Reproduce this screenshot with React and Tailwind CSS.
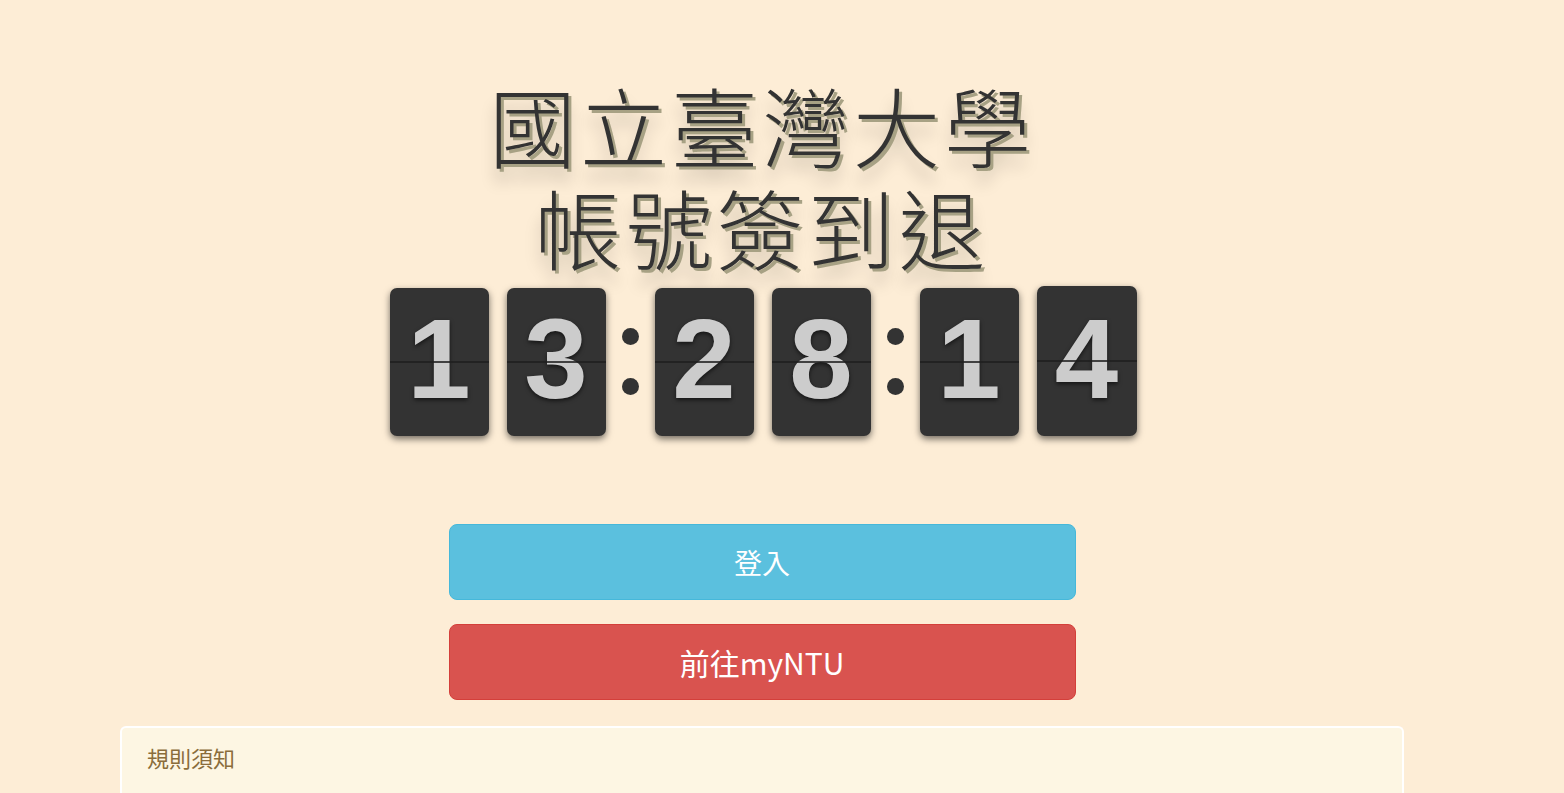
import { Fragment } from "react";

const cjk = "font-['Noto_Sans_CJK_TC','Noto_Sans',sans-serif]";

function Card({ digit, last }) {
  return (
    <div
      className={`relative flex items-center justify-center rounded-[7px] bg-[#333333] shadow-[0_3px_7px_rgba(0,0,0,0.55)] ${
        last ? "h-[150px] w-[100px] -mt-px" : "h-[148px] w-[99px]"
      }`}
    >
      <span className="-mt-[5px] font-['Liberation_Sans',Arial,sans-serif] text-[114px] font-bold leading-none text-[#cccccc] [text-shadow:0_2px_4px_rgba(0,0,0,0.6)]">
        {digit}
      </span>
      <div className="absolute left-0 right-0 top-1/2 h-[2px] -translate-y-1/2 bg-[#1e1e1e] opacity-80" />
    </div>
  );
}

function Colon() {
  return (
    <div className="flex w-[49px] flex-col items-center justify-center gap-[33px]">
      <div className="h-[17px] w-[17px] rounded-full bg-[#333333]" />
      <div className="h-[17px] w-[17px] rounded-full bg-[#333333]" />
    </div>
  );
}

export default function App() {
  const groups = [["1", "3"], ["2", "8"], ["1", "4"]];

  return (
    <div className={`min-h-[793px] overflow-hidden bg-[#fdedd6] ${cjk}`}>
      <div className="flex w-[1524px] flex-col items-center pt-[73px]">
        <h1 className="text-center text-[87px] font-light leading-[102px] tracking-[4px] text-[#333333] [text-shadow:3px_3px_0_#a7a184,0_14px_16px_rgba(0,0,0,0.22)]">
          國立臺灣大學
          <br />
          帳號簽到退
        </h1>

        <div className="mt-[10px] flex items-center pl-[2px]">
          {groups.map((g, i) => (
            <Fragment key={i}>
              {i > 0 && <Colon />}
              <div className="flex items-center gap-[18px]">
                <Card digit={g[0]} />
                <Card digit={g[1]} last={i === 2} />
              </div>
            </Fragment>
          ))}
        </div>

        <div className="mt-[88px] flex w-[627px] flex-col gap-[24px]">
          <button className="h-[76px] rounded-[8px] border border-[#46b8da] bg-[#5bc0de] text-[28px] text-white">
            登入
          </button>
          <button className="h-[76px] rounded-[8px] border border-[#d43f3a] bg-[#d9534f] text-[30px] text-white">
            前往myNTU
          </button>
        </div>

        <div className="mt-[26px] w-[1284px] rounded-t-[6px] border-2 border-b-0 border-white bg-[#fdf6e3] px-[25px] pt-[14px] pb-[40px]">
          <h3 className="text-[22px] leading-[30px] text-[#8a6d3b]">規則須知</h3>
        </div>
      </div>
    </div>
  );
}
